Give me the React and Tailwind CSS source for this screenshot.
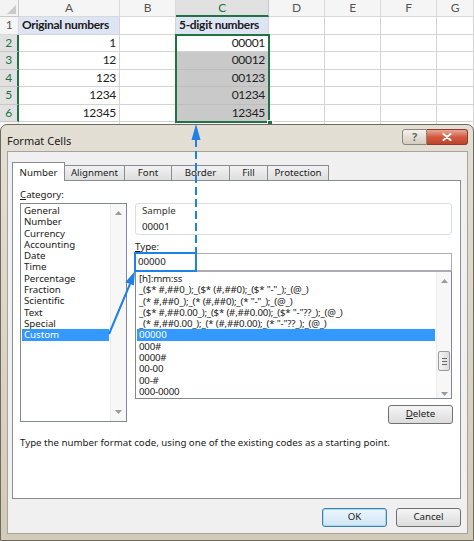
import React from 'react';

const letters = ['A', 'B', 'C', 'D', 'E', 'F', 'G'];
const rows = [
  { n: 1, a: 'Original numbers', c: '5-digit numbers' },
  { n: 2, a: '1', c: '00001' },
  { n: 3, a: '12', c: '00012' },
  { n: 4, a: '123', c: '00123' },
  { n: 5, a: '1234', c: '01234' },
  { n: 6, a: '12345', c: '12345' },
];

function cellClass(r, l) {
  if (r.n === 1 && (l === 'A' || l === 'C')) {
    return 'flex items-center pl-[3px] border-r border-b border-[#d4d4d4] bg-[#dde5f4] font-bold text-[#1a1a1a] whitespace-nowrap overflow-hidden';
  }
  if (l === 'C' && r.n >= 3 && r.n <= 6) {
    return 'flex items-center justify-end pr-[3px] border-r border-b border-[#bdbdbd] bg-[#c9c9c9]';
  }
  return 'flex items-center justify-end pr-[3px] border-r border-b border-[#d4d4d4] bg-white';
}

function Sheet() {
  return (
    <div className="relative h-[130px] grid grid-cols-[19px_101px_56px_93px_56px_56px_56px_37px] grid-rows-[17px_repeat(6,17.5px)_1fr] font-['Lato',sans-serif] text-[12px] tracking-[-0.3px] text-[#222]">
      <div className="relative border-r border-b border-[#c8c8c8] bg-[#f3f3f3]">
        <svg className="absolute right-[2px] bottom-[2px]" width="9" height="9">
          <polygon points="9,0 9,9 0,9" fill="#c9c9c9" />
        </svg>
      </div>
      {letters.map((l) => (
        <div
          key={l}
          className={
            l === 'C'
              ? 'flex items-center justify-center border-r border-b-2 border-r-[#c8c8c8] border-b-[#217346] bg-[#e1e1e1] text-[#217346]'
              : 'flex items-center justify-center border-r border-b border-[#d9d9d9] bg-[#f5f5f5] text-[#555]'
          }
        >
          {l}
        </div>
      ))}
      {rows.map((r) => (
        <React.Fragment key={r.n}>
          <div
            className={
              r.n >= 2 && r.n <= 6
                ? 'flex items-center justify-center border-r-2 border-b border-r-[#217346] border-b-[#c8c8c8] bg-[#e1e1e1] text-[#217346]'
                : 'flex items-center justify-center border-r border-b border-[#d9d9d9] bg-[#f5f5f5] text-[#555]'
            }
          >
            {r.n}
          </div>
          {letters.map((l) => (
            <div key={l} className={cellClass(r, l)}>
              {l === 'A' ? r.a : l === 'C' ? r.c : ''}
            </div>
          ))}
        </React.Fragment>
      ))}
      <div className="border-r border-[#d9d9d9] bg-[#f5f5f5]" />
      {letters.map((l) => (
        <div key={l} className="border-r border-[#d4d4d4] bg-white" />
      ))}
      <div className="absolute left-[175px] top-[33.5px] w-[95px] h-[89.5px] border-2 border-[#217346]" />
      <div className="absolute left-[266.5px] top-[119.5px] w-[6px] h-[6px] bg-[#217346] border border-white" />
    </div>
  );
}

const categories = [
  'General', 'Number', 'Currency', 'Accounting', 'Date', 'Time',
  'Percentage', 'Fraction', 'Scientific', 'Text', 'Special', 'Custom',
];

const formats = [
  '[h]:mm:ss',
  '_($* #,##0_);_($* (#,##0);_($* "-"_);_(@_)',
  '_(* #,##0_);_(* (#,##0);_(* "-"_);_(@_)',
  '_($* #,##0.00_);_($* (#,##0.00);_($* "-"??_);_(@_)',
  '_(* #,##0.00_);_(* (#,##0.00);_(* "-"??_);_(@_)',
  '00000',
  '000#',
  '0000#',
  '00-00',
  '00-#',
  '000-0000',
];

function UpArrow() {
  return (
    <svg width="7" height="4" className="shrink-0">
      <polygon points="0,4 3.5,0 7,4" fill="#9b9b9b" />
    </svg>
  );
}

function DownArrow() {
  return (
    <svg width="7" height="4" className="shrink-0">
      <polygon points="0,0 7,0 3.5,4" fill="#9b9b9b" />
    </svg>
  );
}

function Button({ children, primary }) {
  return (
    <div
      className={
        primary
          ? 'w-[65px] h-[19px] flex items-center justify-center rounded-[3px] border border-[#3c7fb1] bg-linear-to-b from-[#eaf6fd] to-[#d2e6f3] shadow-[inset_0_0_0_1px_#a7d8f5] text-[#1a1a1a]'
          : 'w-[65px] h-[19px] flex items-center justify-center rounded-[3px] border border-[#707070] bg-linear-to-b from-[#f5f5f5] to-[#dcdcdc] text-[#1a1a1a]'
      }
    >
      {children}
    </div>
  );
}

function Tab({ children, selected, w }) {
  return (
    <div
      className={
        selected
          ? 'relative z-10 h-[19px] -mb-px flex items-start justify-center pt-[3px] border border-b-0 border-[#898c95] bg-white ' + w
          : 'h-[15px] flex items-center justify-center border border-b-0 border-l-0 border-[#898c95] bg-linear-to-b from-[#f2f2f2] to-[#dedede] ' + w
      }
    >
      {children}
    </div>
  );
}

function Dialog() {
  return (
    <div className="absolute left-0 top-[124px] w-[474px] h-[417px] rounded-t-[7px] border border-[#6e6a62] bg-linear-to-b from-[#e4dfd5] to-[#d3cbb9] flex flex-col font-['Noto_Sans',sans-serif] text-[9.7px] text-[#1a1a1a]">
      <div className="h-[26px] shrink-0 flex items-start justify-between pl-[6px] pr-[5px]">
        <span className="mt-[10px] text-[11px] leading-[12px] text-[#222]">Format Cells</span>
        <div className="mt-[4px] flex">
          <div className="w-[25px] h-[16px] flex items-center justify-center rounded-l-[3px] border border-[#8c8678] bg-linear-to-b from-[#f4f1ec] to-[#d4cdbf] text-[11px] font-bold text-[#6a6a6a]">
            ?
          </div>
          <div className="w-[41px] h-[16px] flex items-center justify-center rounded-r-[3px] border border-l-0 border-[#8a3b2d] bg-linear-to-b from-[#e9a796] via-[#d25a41] to-[#c0432c]">
            <svg width="10" height="8">
              <path d="M1.5 1 L8.5 7 M8.5 1 L1.5 7" stroke="white" strokeWidth="2" strokeLinecap="round" />
            </svg>
          </div>
        </div>
      </div>
      <div className="ml-[6px] mr-[5px] h-[383px] shrink-0 border border-[#a8a396] bg-[#f0f0f0] pt-[10px] pl-[4px] pr-[6px] flex flex-col">
        <div className="h-[18px] flex items-end pl-0">
          <Tab selected w="w-[53px]">Number</Tab>
          <Tab w="w-[60px]">Alignment</Tab>
          <Tab w="w-[47px]">Font</Tab>
          <Tab w="w-[58px]">Border</Tab>
          <Tab w="w-[38px]">Fill</Tab>
          <Tab w="w-[61px]">Protection</Tab>
        </div>
        <div className="h-[319px] border border-[#898c95] bg-white px-[7px] flex flex-col">
          <div className="flex gap-[8px]">
            <div className="w-[107px] flex flex-col">
              <div className="mt-[8px] h-[12px] leading-[12px]">
                <span className="underline">C</span>ategory:
              </div>
              <div className="mt-[2px] h-[219px] border border-[#828790] bg-white flex">
                <div className="flex-1 pt-[1px] px-[1px]">
                  {categories.map((c) => (
                    <div
                      key={c}
                      className={
                        c === 'Custom'
                          ? 'h-[11.3px] leading-[11.3px] pl-[2px] bg-[#3399ff] text-white'
                          : 'h-[11.3px] leading-[11.3px] pl-[2px]'
                      }
                    >
                      {c}
                    </div>
                  ))}
                </div>
                <div className="w-[16px] bg-[#f7f7f7] border-l border-[#ececec] flex flex-col items-center justify-between py-[7px]">
                  <UpArrow />
                  <DownArrow />
                </div>
              </div>
            </div>
            <div className="w-[317px] flex flex-col pt-[22px]">
              <div className="h-[32px] rounded-[3px] border border-[#d5dfe5] px-[6px] flex flex-col">
                <div className="mt-[1px] h-[11px] leading-[11px] text-[#333]">Sample</div>
                <div className="mt-[5px] h-[11px] leading-[11px]">00001</div>
              </div>
              <div className="mt-[6px] h-[12px] leading-[12px]">
                <span className="underline">T</span>ype:
              </div>
              <div className="h-[18px] border border-[#abadb3] bg-white flex items-center pl-[2px]">
                00000
              </div>
              <div className="h-[128px] border border-[#828790] border-t-[#abadb3] bg-white flex">
                <div className="flex-1 pt-[1px] px-[1px] whitespace-nowrap overflow-hidden">
                  {formats.map((f) => (
                    <div
                      key={f}
                      className={
                        f === '00000'
                          ? 'h-[11.3px] leading-[11.3px] pl-[2px] bg-[#3399ff] text-white'
                          : 'h-[11.3px] leading-[11.3px] pl-[2px] tracking-[-0.2px]'
                      }
                    >
                      {f}
                    </div>
                  ))}
                </div>
                <div className="w-[15px] bg-[#f7f7f7] border-l border-[#ececec] flex flex-col items-center">
                  <div className="mt-[7px]">
                    <UpArrow />
                  </div>
                  <div className="mt-[68px] w-[12px] h-[20px] rounded-[2px] border border-[#9a9a9a] bg-linear-to-r from-[#f4f4f4] to-[#dcdcdc] flex flex-col items-center justify-center gap-[2px]">
                    <div className="w-[5px] h-px bg-[#666]" />
                    <div className="w-[5px] h-px bg-[#666]" />
                    <div className="w-[5px] h-px bg-[#666]" />
                  </div>
                  <div className="mt-[21px]">
                    <DownArrow />
                  </div>
                </div>
              </div>
              <div className="mt-[6px] flex justify-end mr-[-1px]">
                <Button>
                  <span>
                    <span className="underline">D</span>elete
                  </span>
                </Button>
              </div>
            </div>
          </div>
          <div className="mt-[13px] h-[12px] leading-[12px] whitespace-nowrap">
            Type the number format code, using one of the existing codes as a starting point.
          </div>
        </div>
        <div className="mt-[9px] flex justify-end gap-[9px]">
          <Button primary>OK</Button>
          <Button>Cancel</Button>
        </div>
      </div>
    </div>
  );
}

function Annotations() {
  const c = '#1f80e6';
  return (
    <svg className="absolute left-0 top-0 pointer-events-none" width="474" height="541">
      <line x1="196" y1="139" x2="196" y2="253" stroke={c} strokeWidth="2" strokeDasharray="8 4" />
      <polygon points="196,124 191.5,140 200.5,140" fill={c} />
      <rect x="135" y="253" width="61" height="18" fill="none" stroke={c} strokeWidth="2" />
      <line x1="109" y1="334" x2="130" y2="284" stroke={c} strokeWidth="2" />
      <polygon points="135,271 133.8,285.6 125.4,282.2" fill={c} />
    </svg>
  );
}

export default function App() {
  return (
    <div className="relative w-[474px] h-[541px] overflow-hidden bg-white">
      <Sheet />
      <Dialog />
      <Annotations />
    </div>
  );
}
